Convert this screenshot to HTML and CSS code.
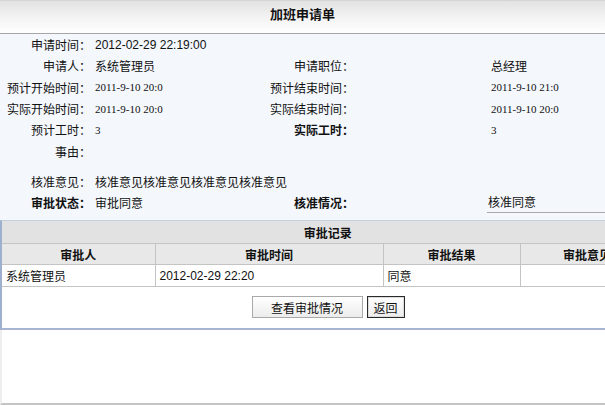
FILE: index.html
```html
<!DOCTYPE html>
<html lang="zh">
<head>
<meta charset="utf-8">
<title>加班申请单</title>
<link rel="stylesheet" href="styles.css">
</head>
<body>
<div class="page">
  <div class="title">加班申请单</div>
  <div class="form">
    <div class="row">
      <div class="lbl">申请时间：</div>
      <div class="val span4">2012-02-29 22:19:00</div>
    </div>
    <div class="row">
      <div class="lbl">申请人：</div>
      <div class="val">系统管理员</div>
      <div class="lbl">申请职位：</div>
      <div></div>
      <div class="val">总经理</div>
    </div>
    <div class="row">
      <div class="lbl">预计开始时间：</div>
      <div class="val serif">2011-9-10 20:0</div>
      <div class="lbl">预计结束时间：</div>
      <div></div>
      <div class="val serif">2011-9-10 21:0</div>
    </div>
    <div class="row">
      <div class="lbl">实际开始时间：</div>
      <div class="val serif">2011-9-10 20:0</div>
      <div class="lbl">实际结束时间：</div>
      <div></div>
      <div class="val serif">2011-9-10 20:0</div>
    </div>
    <div class="row">
      <div class="lbl">预计工时：</div>
      <div class="val serif">3</div>
      <div class="lbl bold">实际工时：</div>
      <div></div>
      <div class="val serif">3</div>
    </div>
    <div class="row tall">
      <div class="lbl">事由：</div>
      <div class="val span4"></div>
    </div>
    <div class="row">
      <div class="lbl">核准意见：</div>
      <div class="val span4">核准意见核准意见核准意见核准意见</div>
    </div>
    <div class="row">
      <div class="lbl bold">审批状态：</div>
      <div class="val">审批同意</div>
      <div class="lbl bold">核准情况：</div>
      <div></div>
      <div class="val line">核准同意</div>
    </div>
  </div>
  <div class="clip">
    <div class="records">
      <table class="rec">
        <colgroup>
          <col class="c1">
          <col class="c2">
          <col class="c3">
          <col class="c4">
        </colgroup>
        <thead>
          <tr class="cap"><th colspan="4">审批记录</th></tr>
          <tr class="head">
            <th>审批人</th>
            <th>审批时间</th>
            <th>审批结果</th>
            <th>审批意见</th>
          </tr>
        </thead>
        <tbody>
          <tr>
            <td>系统管理员</td>
            <td>2012-02-29 22:20</td>
            <td>同意</td>
            <td></td>
          </tr>
        </tbody>
      </table>
      <div class="actions">
        <button class="btn wide">查看审批情况</button>
        <button class="btn focus">返回</button>
      </div>
    </div>
  </div>
  <div class="blank"></div>
</div>
</body>
</html>
```
FILE: styles.css
```css
html, body {
  margin: 0;
  padding: 0;
  background: #fff;
}
body {
  font-family: "Liberation Sans", "Noto Sans CJK SC", sans-serif;
  font-size: 12px;
  color: #111;
  width: 605px;
  height: 405px;
  overflow: hidden;
}
.page {
  width: 605px;
  height: 405px;
  display: flex;
  flex-direction: column;
}
.title {
  box-sizing: border-box;
  height: 34px;
  line-height: 27px;
  text-align: center;
  font-weight: bold;
  font-size: 13px;
  background: linear-gradient(#e2e2e2, #f4f4f4 55%, #ffffff);
  border-top: 1px solid #d4d4d4;
  border-bottom: 1px solid #a6a6a6;
  flex: none;
}
.form {
  background: #f4f7fc;
  padding-bottom: 7px;
  flex: none;
}
.row {
  display: grid;
  grid-template-columns: 91px 175px 88px 133px 1fr;
  height: 21.3px;
  align-items: center;
}
.row.tall {
  height: 30px;
  align-items: start;
}
.row.tall .lbl {
  padding-top: 3px;
}
.lbl {
  text-align: right;
  white-space: nowrap;
}
.bold {
  font-weight: bold;
}
.val {
  padding-left: 4px;
  white-space: nowrap;
}
.span4 {
  grid-column: 2 / 6;
}
.serif {
  font-family: "Liberation Serif", "Noto Sans CJK SC", serif;
  font-size: 11px;
}
.val.line {
  align-self: stretch;
  display: flex;
  align-items: center;
  padding-left: 1px;
  border-bottom: 1px solid #a8a8a8;
}
.clip {
  width: 605px;
  overflow: hidden;
  flex: none;
}
.records {
  width: 654px;
  border-left: 2px solid #9fb0cf;
  border-top: 1px solid #c4cfe0;
  border-bottom: 2px solid #a6b6d2;
  box-sizing: border-box;
}
.rec {
  width: 652px;
  border-collapse: collapse;
  table-layout: fixed;
}
.rec th, .rec td {
  border: 1px solid #c4c4c4;
  padding: 0 4px;
  white-space: nowrap;
  overflow: hidden;
}
.rec .cap th {
  height: 22px;
  background: #e2e2e2;
  font-weight: bold;
  text-align: center;
  border-left: 0;
  border-top: 0;
}
.rec .head th {
  height: 20px;
  background: #e8e8e8;
  font-weight: bold;
  text-align: center;
}
.rec .head th:first-child { border-left: 0; }
.rec td {
  height: 21px;
  background: #fff;
  text-align: left;
}
.rec td:first-child { border-left: 0; }
.c1 { width: 153px; }
.c2 { width: 228px; }
.c3 { width: 137px; }
.c4 { width: 134px; }
.actions {
  display: flex;
  justify-content: center;
  gap: 4px;
  padding: 9px 0 10px;
}
.btn {
  font-family: "Liberation Sans", "Noto Sans CJK SC", sans-serif;
  font-size: 12px;
  color: #111;
  height: 22px;
  padding: 0;
  background: linear-gradient(#ffffff, #ececec);
  border: 1px solid #a9a9a9;
  border-radius: 0;
}
.btn.wide {
  width: 111px;
}
.btn.focus {
  width: 38px;
  border: 1px solid #2a2a2a;
  box-shadow: inset 0 0 0 1px #dcdcdc;
}
.blank {
  flex: 1;
  border-left: 2px solid #eeeeee;
  border-bottom: 2px solid #c4c4c4;
}
```
